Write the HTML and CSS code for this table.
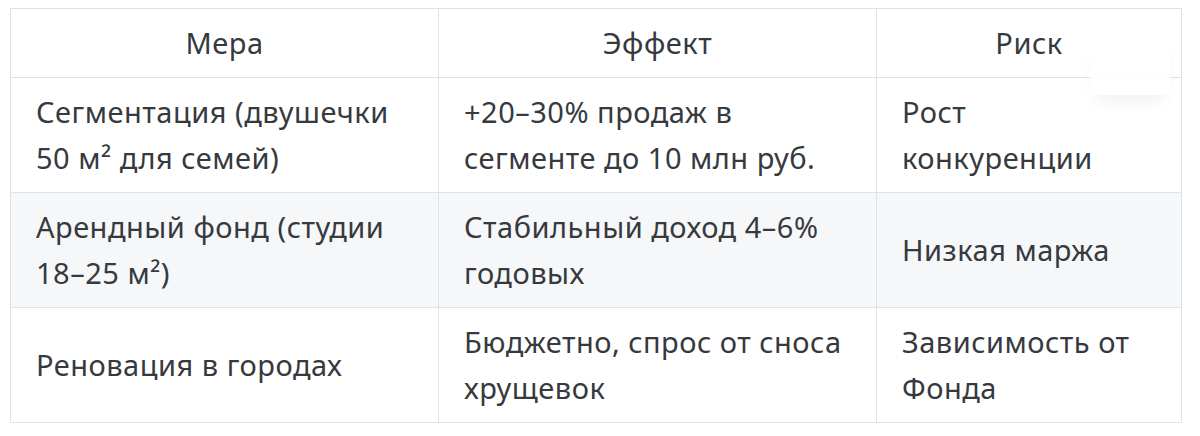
FILE: index.html
```html
<!DOCTYPE html>
<html lang="ru">
<head>
<meta charset="utf-8">
<link rel="stylesheet" href="styles.css">
</head>
<body>
<div class="wrap">
<table class="tbl">
<colgroup><col class="c1"><col class="c2"><col class="c3"></colgroup>
<thead>
<tr><th>Мера</th><th>Эффект</th><th>Риск</th></tr>
</thead>
<tbody>
<tr><td>Сегментация (двушечки 50 м² для семей)</td><td>+20–30% продаж в сегменте до 10 млн руб.</td><td>Рост конкуренции</td></tr>
<tr class="alt"><td>Арендный фонд (студии 18–25 м²)</td><td>Стабильный доход 4–6% годовых</td><td>Низкая маржа</td></tr>
<tr><td>Реновация в городах</td><td>Бюджетно, спрос от сноса хрущевок</td><td>Зависимость от Фонда</td></tr>
</tbody>
</table>
<div class="float"></div>
</div>
</body>
</html>
```
FILE: styles.css
```css
html, body { background: #ffffff; }
body {
  margin: 8px 18px 8px 10px;
  font-family: "Noto Sans", "Open Sans", sans-serif;
  color: #363a3e;
}
.wrap { position: relative; }
.tbl {
  width: 100%;
  border-collapse: collapse;
  table-layout: fixed;
  font-size: 29px;
  line-height: 46px;
  letter-spacing: 0.5px;
}
.c1 { width: 428px; }
.c2 { width: 438px; }
.tbl th, .tbl td {
  border: 1px solid #dfe2e6;
  padding: 11px 25px;
  vertical-align: middle;
  text-align: left;
}
.tbl th { font-weight: 400; text-align: center; }
.tbl .alt td { background: #f6f7f9; }
.float {
  position: absolute;
  top: 26px;
  right: 12px;
  width: 80px;
  height: 61px;
  background: rgba(255,255,255,0.85);
  box-shadow: 0 12px 16px -6px rgba(0,0,0,0.06);
}
```
